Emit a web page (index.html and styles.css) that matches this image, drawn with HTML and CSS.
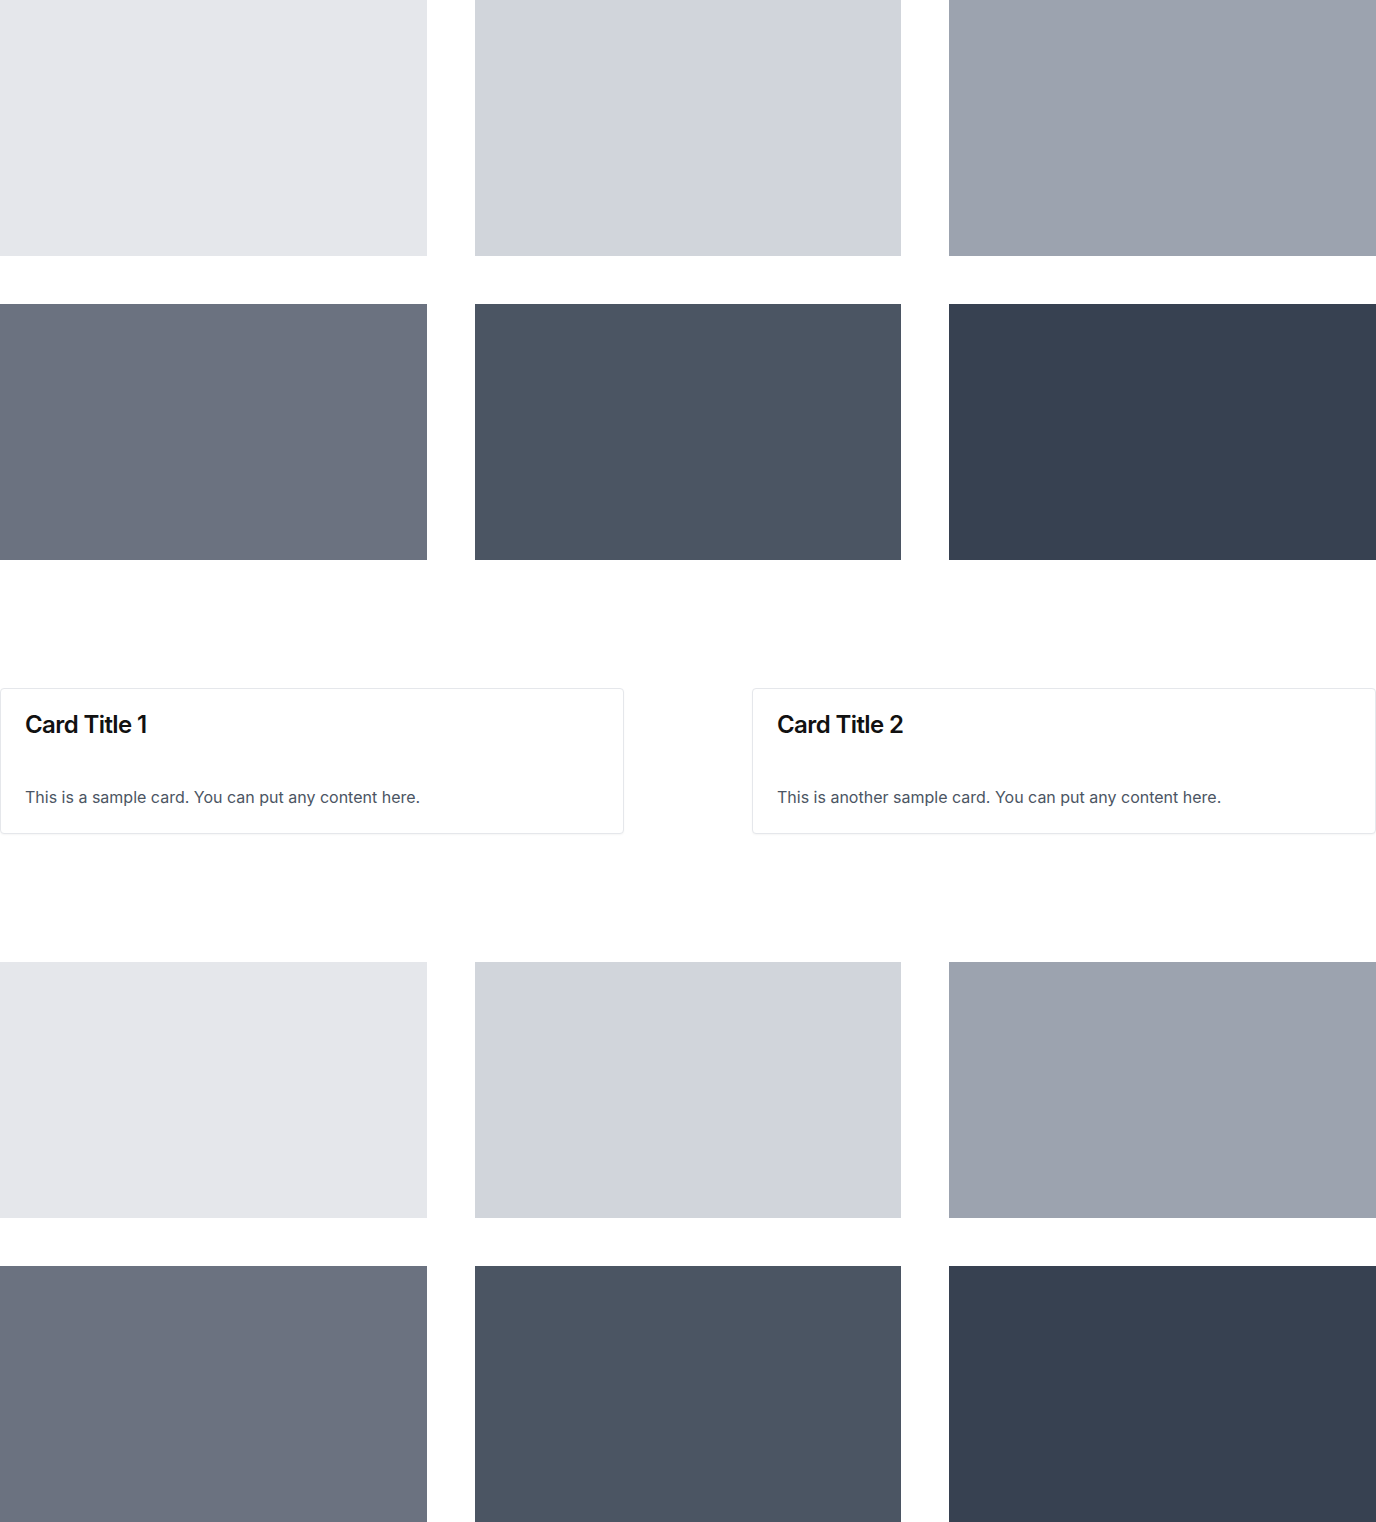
FILE: index.html
```html
<!DOCTYPE html>
<html>
<head>
<meta charset="utf-8">
<link rel="stylesheet" href="styles.css">
</head>
<body>
<div class="page">
  <div class="grid">
    <div class="tile g200"></div>
    <div class="tile g300"></div>
    <div class="tile g400"></div>
    <div class="tile g500"></div>
    <div class="tile g600"></div>
    <div class="tile g700"></div>
  </div>
  <div class="cards">
    <div class="card">
      <h2 class="card-title">Card Title 1</h2>
      <p class="card-text">This is a sample card. You can put any content here.</p>
    </div>
    <div class="card">
      <h2 class="card-title">Card Title 2</h2>
      <p class="card-text">This is another sample card. You can put any content here.</p>
    </div>
  </div>
  <div class="grid">
    <div class="tile g200"></div>
    <div class="tile g300"></div>
    <div class="tile g400"></div>
    <div class="tile g500"></div>
    <div class="tile g600"></div>
    <div class="tile g700"></div>
  </div>
</div>
</body>
</html>
```
FILE: styles.css
```css
html, body {
  margin: 0;
  padding: 0;
  background: #ffffff;
  font-family: Inter, "Noto Sans", sans-serif;
}
.page {
  display: flex;
  flex-direction: column;
  gap: 128px;
}
.grid {
  display: grid;
  grid-template-columns: repeat(3, 1fr);
  gap: 48px;
}
.tile {
  height: 256px;
}
.g200 { background: #e5e7eb; }
.g300 { background: #d1d5db; }
.g400 { background: #9ca3af; }
.g500 { background: #6b7280; }
.g600 { background: #4b5563; }
.g700 { background: #374151; }
.cards {
  display: grid;
  grid-template-columns: repeat(2, 1fr);
  gap: 128px;
}
.card {
  border: 1px solid #e5e7eb;
  border-radius: 4px;
  padding: 24px;
  box-shadow: 0 1px 2px rgba(0,0,0,0.04);
  background: #fff;
}
.card-title {
  margin: 0 0 48px;
  font-size: 24px;
  line-height: 24px;
  font-weight: 600;
  letter-spacing: -0.025em;
  color: #111111;
}
.card-text {
  margin: 0;
  font-size: 16px;
  line-height: 24px;
  color: #4b5563;
}
```
